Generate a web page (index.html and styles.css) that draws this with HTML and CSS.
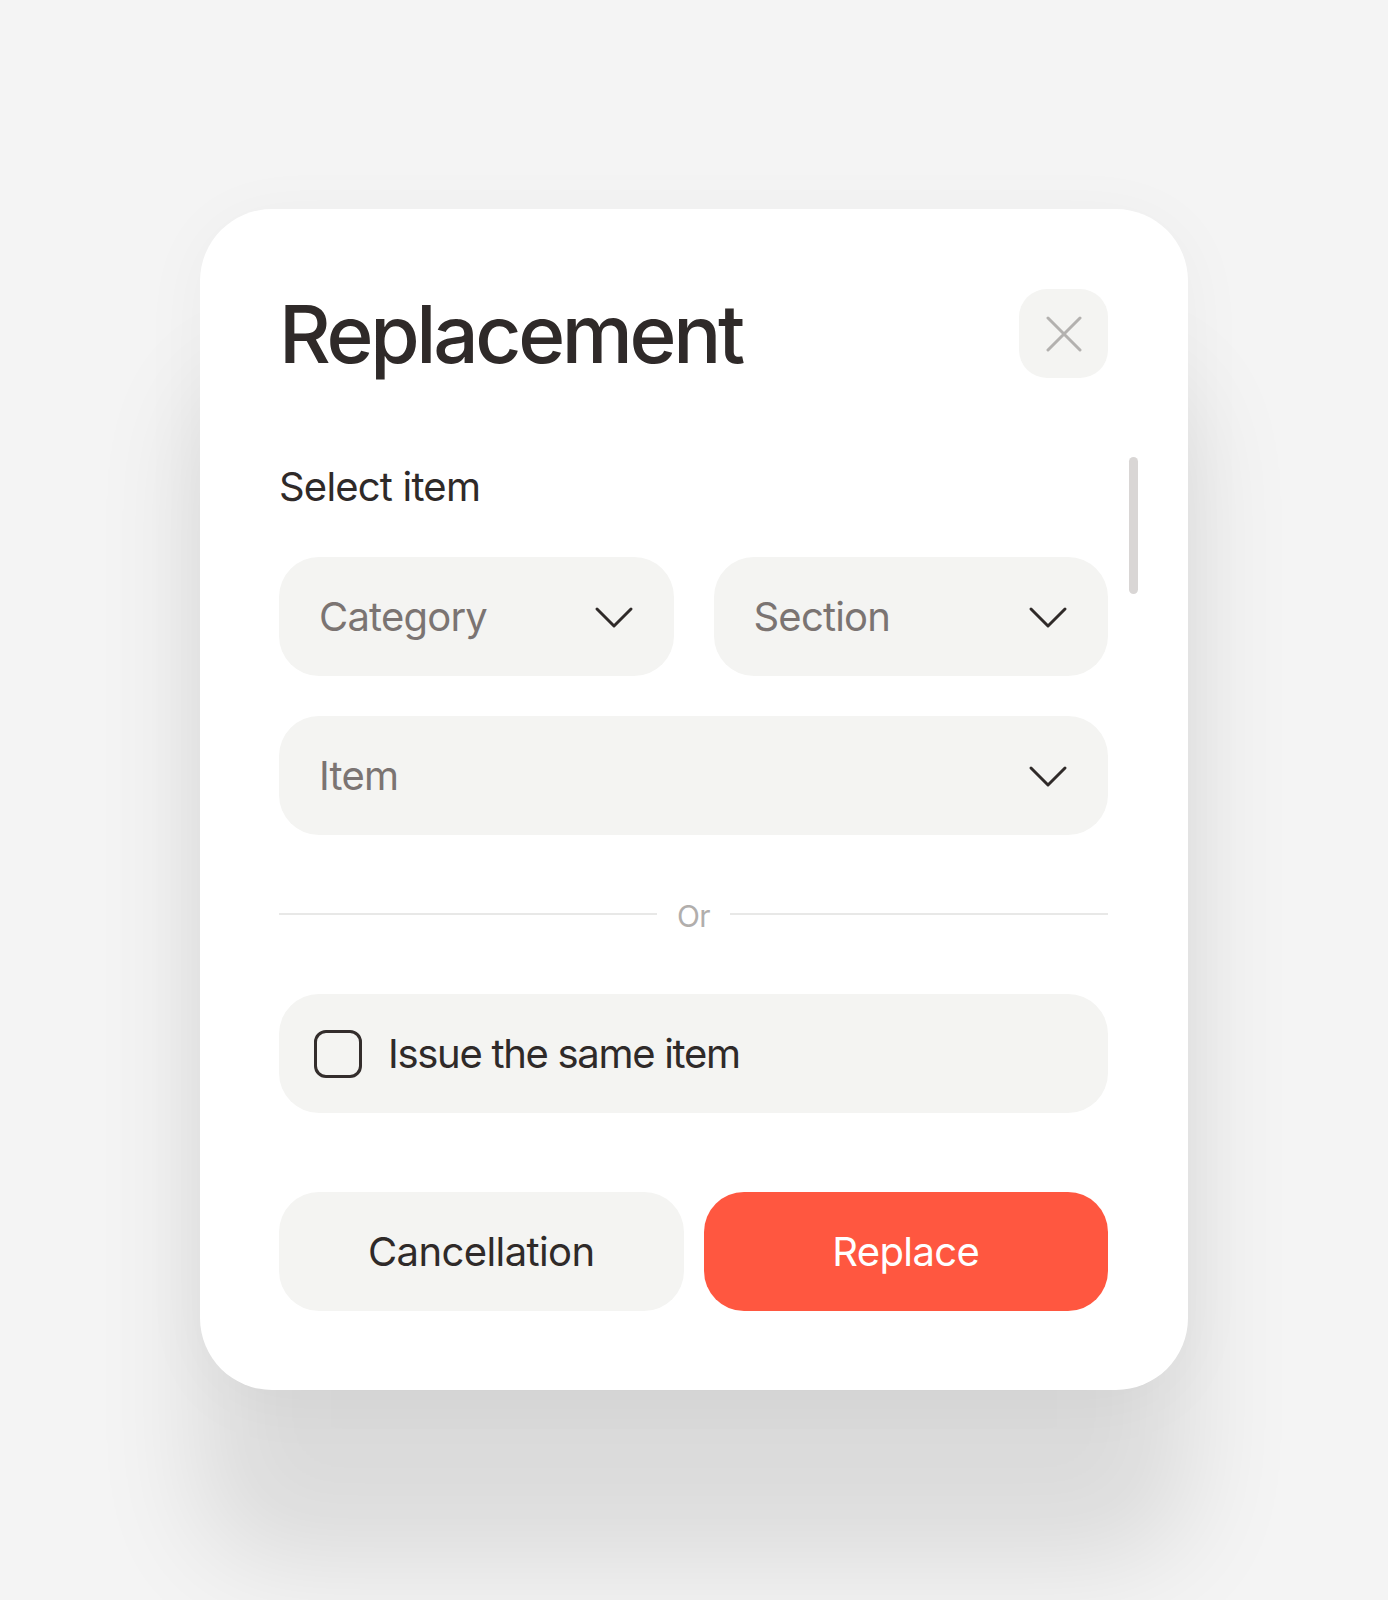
FILE: index.html
```html
<!DOCTYPE html>
<html lang="en">
<head>
<meta charset="utf-8">
<title>Replacement</title>
<link rel="stylesheet" href="styles.css">
</head>
<body>
<div class="page">
  <div class="card">
    <div class="scrollbar"></div>
    <header class="head">
      <h1 class="title">Replacement</h1>
      <button class="close" aria-label="Close">
        <svg width="36" height="36" viewBox="0 0 36 36"><path d="M2 2 L34 34 M34 2 L2 34" fill="none" stroke="#b3b1af" stroke-width="3" stroke-linecap="round"/></svg>
      </button>
    </header>
    <div class="body">
      <p class="label">Select item</p>
      <div class="row-two">
        <div class="select"><span class="ph">Category</span><svg class="chev" width="40" height="24" viewBox="0 0 40 24"><path d="M3 4 L20 21 L37 4" fill="none" stroke="#2f2a29" stroke-width="3" stroke-linecap="round" stroke-linejoin="round"/></svg></div>
        <div class="select"><span class="ph">Section</span><svg class="chev" width="40" height="24" viewBox="0 0 40 24"><path d="M3 4 L20 21 L37 4" fill="none" stroke="#2f2a29" stroke-width="3" stroke-linecap="round" stroke-linejoin="round"/></svg></div>
      </div>
      <div class="select full"><span class="ph">Item</span><svg class="chev" width="40" height="24" viewBox="0 0 40 24"><path d="M3 4 L20 21 L37 4" fill="none" stroke="#2f2a29" stroke-width="3" stroke-linecap="round" stroke-linejoin="round"/></svg></div>
      <div class="divider"><span class="line"></span><span class="or">Or</span><span class="line"></span></div>
      <label class="check"><span class="box"></span><span class="check-text">Issue the same item</span></label>
    </div>
    <div class="actions">
      <button class="btn cancel">Cancellation</button>
      <button class="btn primary">Replace</button>
    </div>
  </div>
</div>
</body>
</html>
```
FILE: styles.css
```css
* { box-sizing: border-box; }
html, body { margin: 0; padding: 0; }
body {
  background: #f4f4f4;
  font-family: Inter, "Liberation Sans", sans-serif;
  color: #2f2a29;
  height: 1600px;
  overflow: hidden;
}
.page {
  padding-top: 209px;
}
.card {
  position: relative;
  width: 988px;
  margin: 0 auto;
  background: #ffffff;
  border-radius: 72px;
  padding: 80px 80px 79px 79px;
  box-shadow: 0 170px 110px rgba(0, 0, 0, 0.105), 0 10px 70px rgba(0, 0, 0, 0.04);
}
.scrollbar {
  position: absolute;
  right: 50px;
  top: 248px;
  width: 9px;
  height: 137px;
  border-radius: 5px;
  background: #d9d6d5;
}
.head {
  display: flex;
  align-items: center;
  justify-content: space-between;
  height: 89px;
}
.title {
  margin: 0;
  font-size: 80px;
  font-weight: 500;
  line-height: 89px;
  letter-spacing: -3.3px;
  color: #2f2a29;
}
.close {
  width: 89px;
  height: 89px;
  border: none;
  border-radius: 28px;
  background: #f4f4f2;
  display: flex;
  align-items: center;
  justify-content: center;
  padding: 0;
}
.close svg { display: block; }
.body {
  display: flex;
  flex-direction: column;
}
.label {
  margin: 85px 0 46px;
  font-size: 40px;
  line-height: 48px;
  letter-spacing: -0.8px;
  color: #2f2a29;
}
.row-two {
  display: grid;
  grid-template-columns: 1fr 1fr;
  gap: 40px;
  margin-bottom: 40px;
}
.select {
  height: 119px;
  border-radius: 40px;
  background: #f4f4f2;
  display: flex;
  align-items: center;
  justify-content: space-between;
  padding: 0 40px;
}
.ph {
  font-size: 40px;
  line-height: 48px;
  letter-spacing: -0.8px;
  color: #7b7472;
}
.chev { display: block; flex: none; }
.divider {
  display: flex;
  align-items: center;
  height: 40px;
  margin-top: 59px;
  gap: 20px;
}
.line {
  flex: 1;
  height: 2px;
  background: #e8e8e7;
}
.or {
  font-size: 30px;
  line-height: 40px;
  padding-top: 3px;
  color: #b1aeac;
  letter-spacing: -0.5px;
}
.check {
  margin-top: 60px;
  height: 119px;
  border-radius: 40px;
  background: #f4f4f2;
  display: flex;
  align-items: center;
  padding-left: 35px;
  gap: 26px;
}
.box {
  width: 48px;
  height: 48px;
  border: 3.5px solid #332d2c;
  border-radius: 12px;
  flex: none;
}
.check-text {
  font-size: 40px;
  line-height: 48px;
  letter-spacing: -1.3px;
  color: #2f2a29;
}
.actions {
  margin-top: 79px;
  display: grid;
  grid-template-columns: 1fr 1fr;
  gap: 20px;
}
.btn {
  height: 119px;
  border: none;
  border-radius: 40px;
  font-family: Inter, "Liberation Sans", sans-serif;
  font-size: 40px;
  letter-spacing: -0.6px;
  padding: 0;
}
.cancel {
  background: #f4f4f2;
  color: #2f2a29;
}
.primary {
  background: #ff5740;
  color: #ffffff;
}
```
